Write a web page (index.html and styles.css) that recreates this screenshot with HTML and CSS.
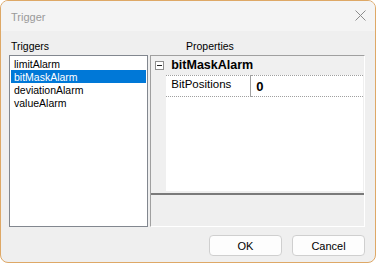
FILE: index.html
```html
<!DOCTYPE html>
<html lang="en">
<head>
  <meta charset="UTF-8">
  <title>Trigger</title>
  <link rel="stylesheet" href="styles.css">
</head>
<body>
  <div class="window">
    <div class="titlebar">
      <span class="title">Trigger</span>
      <svg class="close" width="11" height="11" viewBox="0 0 11 11">
        <path d="M0.5 0.5 L10.5 10.5 M10.5 0.5 L0.5 10.5" stroke="#8c8c8c" stroke-width="1" fill="none"/>
      </svg>
    </div>

    <div class="content">
      <div class="labels">
        <div class="label-left">Triggers</div>
        <div class="label-right">Properties</div>
      </div>

      <div class="panels">
        <div class="listbox">
          <div class="item">limitAlarm</div>
          <div class="item selected">bitMaskAlarm</div>
          <div class="item">deviationAlarm</div>
          <div class="item">valueAlarm</div>
        </div>

        <div class="propgrid">
          <div class="propview">
            <div class="category">
              <span class="toggle">
                <svg width="9" height="9" viewBox="0 0 9 9">
                  <rect x="0.5" y="0.5" width="8" height="8" fill="#fff" stroke="#8e8e8e"/>
                  <path d="M2 4.5 H7" stroke="#222" stroke-width="1"/>
                </svg>
              </span>
              <span class="cat-name">bitMaskAlarm</span>
            </div>
            <div class="prop-row">
              <div class="margin"></div>
              <div class="prop-name">BitPositions</div>
              <div class="prop-value">0</div>
            </div>
            <div class="prop-empty">
              <div class="margin"></div>
            </div>
          </div>
          <div class="splitter"></div>
          <div class="description"></div>
        </div>
      </div>

      <div class="buttons">
        <button class="btn">OK</button>
        <button class="btn">Cancel</button>
      </div>
    </div>
  </div>
</body>
</html>
```

FILE: styles.css
```css
html, body {
  margin: 0;
  background: #ffffff;
}

body {
  font-family: "Liberation Sans", Arial, sans-serif;
  font-size: 10.5px;
  color: #000;
}

.window {
  width: 376px;
  height: 263px;
  box-sizing: border-box;
  border: 1px solid #dea866;
  border-radius: 8px;
  overflow: hidden;
  background: #efefef;
  display: flex;
  flex-direction: column;
}

.titlebar {
  height: 30px;
  flex: none;
  background: #f4f4f4;
  display: flex;
  align-items: center;
  justify-content: space-between;
  padding: 0 9px 0 10px;
}

.title {
  font-size: 11px;
  color: #9a9a9a;
  margin-top: 1px;
}

.close {
  margin-top: -1px;
}

.content {
  flex: 1;
  display: flex;
  flex-direction: column;
  padding: 9px 10px 6px 8px;
}

.labels {
  display: flex;
  height: 13px;
  line-height: 13px;
  margin-bottom: 2px;
}

.label-left {
  width: 142px;
  padding-left: 2px;
}

.label-right {
  padding-left: 33px;
}

.panels {
  display: flex;
  height: 172px;
  gap: 2px;
}

.listbox {
  width: 140px;
  box-sizing: border-box;
  border: 1px solid #82878f;
  background: #fff;
  padding-top: 1px;
}

.item {
  height: 13px;
  line-height: 14px;
  padding-left: 3px;
  margin: 0 1px;
}

.item.selected {
  background: #0078d7;
  color: #fff;
}

.propgrid {
  width: 216px;
  box-sizing: border-box;
  border-top: 1px solid #a0a0a0;
  border-left: 1px solid #a0a0a0;
  border-right: 1px solid #fff;
  border-bottom: 1px solid #fff;
  display: flex;
  flex-direction: column;
}

.propview {
  height: 135px;
  margin-right: 1px;
  background: #fff;
  display: flex;
  flex-direction: column;
}

.category {
  height: 19px;
  flex: none;
  background: #f0f0f0;
  display: flex;
  align-items: center;
}

.toggle {
  width: 9px;
  height: 9px;
  margin-left: 4px;
  margin-right: 7px;
  display: flex;
}

.cat-name {
  font-weight: bold;
  font-size: 12.5px;
  margin-top: -2px;
}

.prop-row {
  display: flex;
  height: 22px;
  flex: none;
}

.margin {
  width: 15px;
  flex: none;
  background: #f0f0f0;
}

.prop-name {
  width: 85px;
  box-sizing: border-box;
  padding-left: 5px;
  font-size: 11.5px;
  line-height: 17px;
  border-top: 1px dotted #a0a0a0;
  border-bottom: 1px dotted #a0a0a0;
  border-right: 1px solid #a0a0a0;
}

.prop-value {
  flex: 1;
  padding-left: 5px;
  font-size: 13px;
  font-weight: bold;
  line-height: 22px;
  border-top: 1px dotted #a0a0a0;
  border-bottom: 1px dotted #a0a0a0;
}

.prop-empty {
  flex: 1;
  display: flex;
}

.splitter {
  height: 2px;
  margin-top: 2px;
  background: #7a7a7a;
  flex: none;
}

.description {
  flex: 1;
  background: #efefef;
}

.buttons {
  display: flex;
  justify-content: flex-end;
  gap: 10px;
  margin-top: 8px;
}

.btn {
  width: 73px;
  height: 21px;
  padding: 0;
  border: 1px solid #cfcfcf;
  border-radius: 4px;
  background: #fdfdfd;
  font-family: "Liberation Sans", Arial, sans-serif;
  font-size: 11px;
  color: #000;
}
```
